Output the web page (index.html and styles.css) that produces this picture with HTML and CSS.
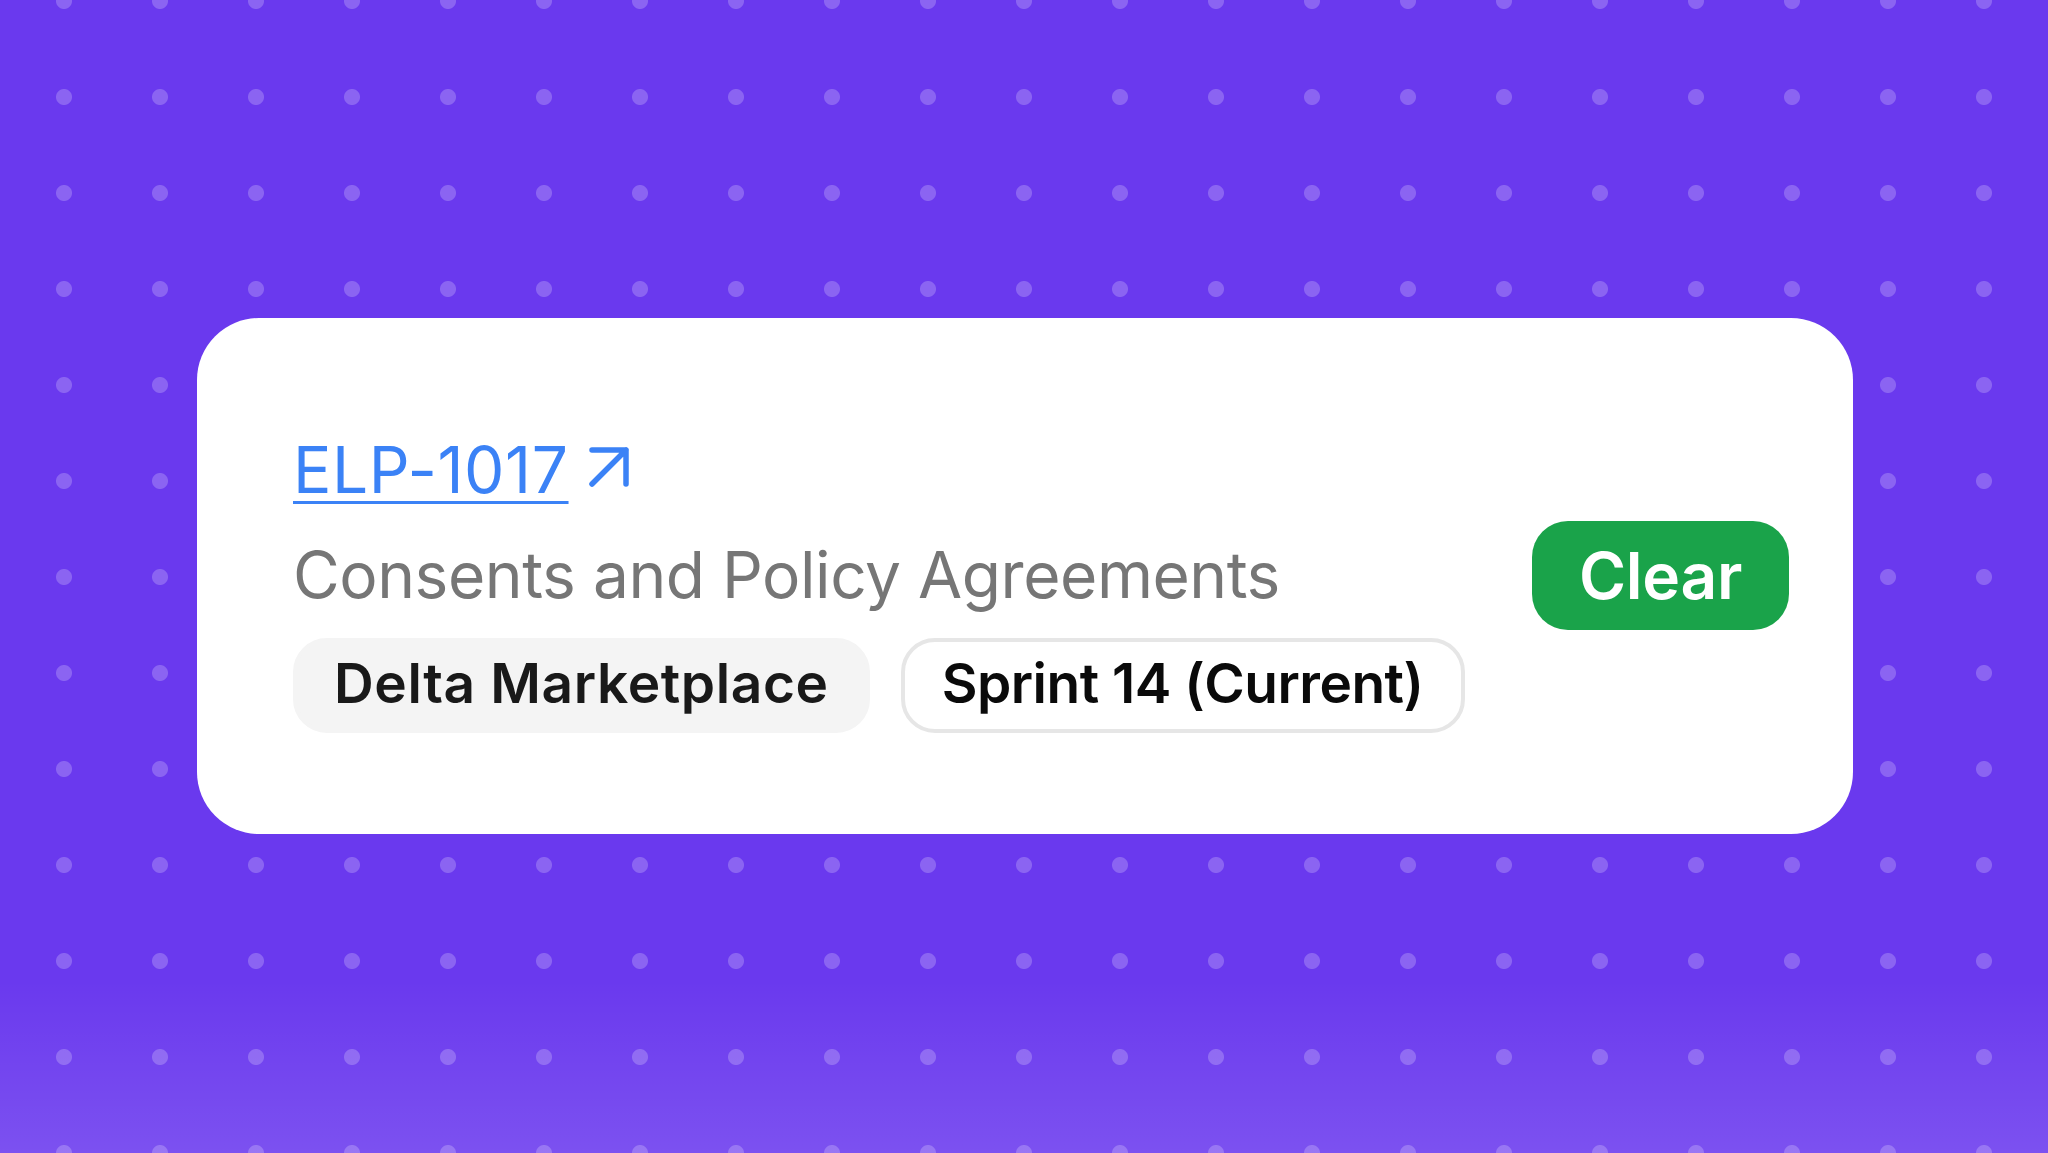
FILE: index.html
```html
<!DOCTYPE html>
<html lang="en">
<head>
<meta charset="utf-8">
<title>ELP-1017</title>
<link rel="stylesheet" href="styles.css">
</head>
<body>
<main class="stage">
  <section class="card">
    <div class="info">
      <div class="key-row">
        <a class="key-link" href="#">ELP-1017</a>
        <svg class="ext-icon" width="44" height="44" viewBox="0 0 44 44" aria-hidden="true">
          <path d="M6 5H40V39M40 5L6 39" fill="none" stroke="#3b82f6" stroke-width="5.5" stroke-linecap="round" stroke-linejoin="round"/>
        </svg>
      </div>
      <h1 class="title">Consents and Policy Agreements</h1>
      <div class="tags">
        <span class="tag tag-filled">Delta Marketplace</span>
        <span class="tag tag-outline">Sprint 14 (Current)</span>
      </div>
    </div>
    <button class="clear-btn" type="button">Clear</button>
  </section>
</main>
</body>
</html>
```

FILE: styles.css
```css
* { box-sizing: border-box; }

html, body {
  margin: 0;
  padding: 0;
  height: 100%;
}

body {
  font-family: "Inter", "Liberation Sans", sans-serif;
  background-color: #6a39ee;
  background-image:
    linear-gradient(to bottom, rgba(255,255,255,0) 85%, rgba(255,255,255,0.12) 100%),
    radial-gradient(circle at center, rgba(255,255,255,0.22) 7.5px, rgba(255,255,255,0) 8.5px);
  background-size: 100% 100%, 96px 96px;
  background-position: 0 0, 16px -47px;
  background-repeat: no-repeat, repeat;
}

.stage {
  height: 100%;
  display: flex;
  align-items: center;
  justify-content: center;
  padding: 0 0 2px 2px;
}

.card {
  width: 1656px;
  height: 516px;
  background: #ffffff;
  border-radius: 62px;
  display: flex;
  align-items: center;
  justify-content: space-between;
  padding: 0 64px 0 96px;
}

.info {
  display: flex;
  flex-direction: column;
  align-items: flex-start;
  padding-top: 12px;
}

.key-row {
  display: flex;
  align-items: center;
  gap: 17px;
  line-height: 77px;
}

.key-link {
  font-size: 64px;
  font-weight: 400;
  color: #3b82f6;
  text-decoration: underline;
  text-decoration-thickness: 3px;
  text-underline-offset: 8px;
  letter-spacing: 0.6px;
}

.ext-icon {
  display: block;
  margin-top: -4px;
}

.title {
  margin: 28px 0 0;
  font-size: 64px;
  line-height: 77px;
  font-weight: 400;
  color: #767676;
  letter-spacing: -0.45px;
}

.tags {
  display: flex;
  gap: 31px;
  margin-top: 25px;
}

.tag {
  font-size: 55px;
  font-weight: 600;
  line-height: 66px;
  border: 4px solid transparent;
  border-radius: 34px;
  padding: 8px 37px 13px;
}

.tag-filled {
  background: #f4f4f4;
  border-color: #f4f4f4;
  color: #191919;
  letter-spacing: 0.6px;
}

.tag-outline {
  background: #ffffff;
  border-color: #e6e6e6;
  color: #0a0a0a;
  letter-spacing: -0.5px;
}

.clear-btn {
  font-family: inherit;
  font-size: 64px;
  font-weight: 600;
  line-height: 77px;
  color: #ffffff;
  background: #1aa34a;
  border: none;
  border-radius: 36px;
  padding: 16px 47px;
  letter-spacing: -0.3px;
  cursor: pointer;
}
```
